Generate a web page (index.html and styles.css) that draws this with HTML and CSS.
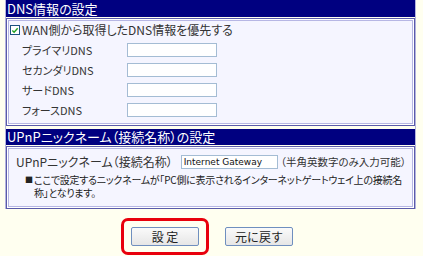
FILE: index.html
```html
<!DOCTYPE html>
<html lang="ja">
<head>
    <meta charset="UTF-8">
    <title>DNS情報の設定</title>
    <link rel="stylesheet" href="styles.css">
</head>
<body>
    <div class="panel">
        <!-- DNS -->
        <div class="panel-head">DNS情報の設定</div>
        <div class="panel-body dns-body">
            <label class="check-row">
                <span class="check">
                    <svg width="9" height="9" viewBox="0 0 9 9"><path d="M1.5 4.5 L3.5 6.5 L7.5 2" fill="none" stroke="#21a121" stroke-width="1.6"/></svg>
                </span>
                WAN側から取得したDNS情報を優先する
            </label>
            <div class="field-row"><span class="field-label">プライマリDNS</span><input class="text-input" type="text"></div>
            <div class="field-row"><span class="field-label">セカンダリDNS</span><input class="text-input" type="text"></div>
            <div class="field-row"><span class="field-label">サードDNS</span><input class="text-input" type="text"></div>
            <div class="field-row"><span class="field-label">フォースDNS</span><input class="text-input" type="text"></div>
        </div>

        <!-- UPnP -->
        <div class="panel-head upnp-head">UPnPニックネーム（接続名称）の設定</div>
        <div class="panel-body upnp-body">
            <div class="nick-row">
                <span class="nick-label">UPnPニックネーム（接続名称）</span>
                <input class="nick-input" type="text" value="Internet Gateway">
                <span class="nick-hint">（半角英数字のみ入力可能）</span>
            </div>
            <div class="note">
                <span class="note-mark">■</span>
                <p>ここで設定するニックネームが「PC側に表示されるインターネットゲートウェイ上の接続名<br>称」となります。</p>
            </div>
        </div>
    </div>

    <div class="actions">
        <span class="highlight"><button class="btn">設 定</button></span>
        <button class="btn">元に戻す</button>
    </div>
</body>
</html>
```
FILE: styles.css
```css
* {
    margin: 0;
    padding: 0;
    box-sizing: border-box;
}
body {
    background-color: #fffff0;
    font-family: 'Noto Sans CJK JP', 'Noto Sans', sans-serif;
    font-size: 12px;
    color: #333;
    font-feature-settings: "palt";
}
.panel {
    width: 411px;
    margin-left: 5px;
    border-left: 1px solid #b4b4dc;
    border-right: 1px solid #b4b4dc;
}
.panel-head {
    background-color: #000080;
    color: #fff;
    font-size: 13px;
    height: 17px;
    line-height: 17px;
    padding-left: 1px;
}
.upnp-head {
    margin-top: 3px;
    height: 16px;
    line-height: 16px;
}
.panel-body {
    background-color: #f5f5ff;
    border: 1px solid #5a5aaa;
    box-shadow: inset 0 0 0 1px #fff, inset 0 0 0 2px #b6b6e4;
    margin-top: 1px;
}
.dns-body {
    height: 108px;
    padding: 4px 0 0 3px;
}
.check-row {
    display: flex;
    align-items: center;
    height: 14px;
    line-height: 14px;
}
.check {
    display: inline-flex;
    width: 10px;
    height: 10px;
    margin-right: 2px;
    border: 1px solid #1c5180;
    background-color: #fff;
}
.field-row {
    display: flex;
    align-items: center;
    height: 20px;
    margin-left: 12px;
    font-size: 11px;
}
.check-row + .field-row {
    margin-top: 3px;
}
.field-label {
    width: 105px;
}
.text-input {
    width: 90px;
    height: 14px;
    border: 1px solid #a4bcd4;
    background-color: #fff;
}
.upnp-body {
    height: 63px;
    padding: 7px 0 0 9px;
}
.nick-row {
    display: flex;
    align-items: center;
    height: 15px;
    font-size: 12px;
}
.nick-input {
    width: 97px;
    height: 14px;
    margin-left: 8px;
    border: 1px solid #a4bcd4;
    background-color: #fff;
    font-family: 'DejaVu Sans', sans-serif;
    font-size: 9px;
    color: #111;
    padding-left: 2px;
}
.nick-hint {
    margin-left: 3px;
    font-size: 10.5px;
}
.note {
    display: flex;
    margin: 4px 0 0 9px;
    font-size: 10px;
    line-height: 13px;
    letter-spacing: -0.25px;
    color: #222;
    white-space: nowrap;
}
.note-mark {
    width: 9px;
    font-size: 8px;
}
.actions {
    display: flex;
    align-items: center;
    margin: 9px 0 0 121px;
}
.highlight {
    display: flex;
    padding: 6px 7px;
    border: 3px solid #e8000c;
    border-radius: 7px;
    margin-right: 16px;
}
.btn {
    width: 68px;
    height: 19px;
    font-family: 'Noto Sans CJK JP', sans-serif;
    font-size: 12px;
    color: #222;
    background: linear-gradient(#fafafa, #e6e6e6);
    border: 1px solid #6f8fbf;
    border-radius: 2px;
}
```
